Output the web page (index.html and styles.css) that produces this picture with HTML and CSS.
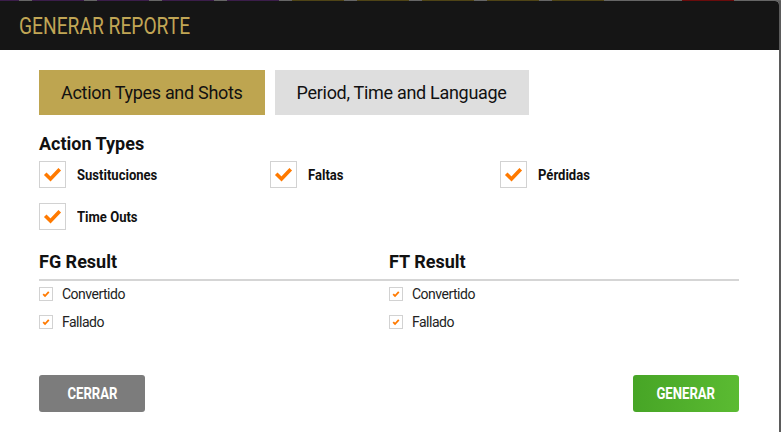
FILE: index.html
```html
<!DOCTYPE html>
<html lang="es">
<head>
<meta charset="utf-8">
<title>Generar reporte</title>
<link rel="stylesheet" href="styles.css">
</head>
<body>
<div class="strip">
  <span class="seg p w19"></span><span class="gap"></span>
  <span class="seg p"></span><span class="gap"></span>
  <span class="seg p"></span><span class="gap"></span>
  <span class="seg p"></span><span class="gap"></span>
  <span class="seg p"></span><span class="gap"></span>
  <span class="seg o"></span><span class="gap"></span>
  <span class="seg o"></span><span class="gap"></span>
  <span class="seg o"></span><span class="gap"></span>
  <span class="seg o"></span><span class="gap"></span>
  <span class="seg o"></span><span class="gap"></span>
  <span class="seg g"></span><span class="gap"></span>
  <span class="seg r"></span><span class="gap"></span>
</div>
<div class="modal">
  <div class="modal-header">
    <span class="cond title">GENERAR REPORTE</span>
  </div>
  <div class="modal-body">
    <div class="tabs">
      <div class="tab active">Action Types and Shots</div>
      <div class="tab">Period, Time and Language</div>
    </div>

    <h3 class="section-title">Action Types</h3>
    <div class="big-checks">
      <label class="big-check"><span class="box"><svg viewBox="0 0 25 25" width="25" height="25"><polyline points="6.5,13 10.5,17 18.5,8.5" fill="none" stroke="#ff7a00" stroke-width="3.6" stroke-linecap="square"/></svg></span><span class="cond lbl">Sustituciones</span></label>
      <label class="big-check"><span class="box"><svg viewBox="0 0 25 25" width="25" height="25"><polyline points="6.5,13 10.5,17 18.5,8.5" fill="none" stroke="#ff7a00" stroke-width="3.6" stroke-linecap="square"/></svg></span><span class="cond lbl">Faltas</span></label>
      <label class="big-check"><span class="box"><svg viewBox="0 0 25 25" width="25" height="25"><polyline points="6.5,13 10.5,17 18.5,8.5" fill="none" stroke="#ff7a00" stroke-width="3.6" stroke-linecap="square"/></svg></span><span class="cond lbl">Pérdidas</span></label>
      <label class="big-check"><span class="box"><svg viewBox="0 0 25 25" width="25" height="25"><polyline points="6.5,13 10.5,17 18.5,8.5" fill="none" stroke="#ff7a00" stroke-width="3.6" stroke-linecap="square"/></svg></span><span class="cond lbl">Time Outs</span></label>
    </div>

    <div class="results">
      <div class="result-col">
        <h3 class="section-title result-title">FG Result</h3>
        <label class="small-check"><span class="sbox"><svg viewBox="0 0 12 12" width="12" height="12"><polyline points="3.2,6.2 5,8 8.8,3.8" fill="none" stroke="#ff7a00" stroke-width="1.8"/></svg></span>Convertido</label>
        <label class="small-check"><span class="sbox"><svg viewBox="0 0 12 12" width="12" height="12"><polyline points="3.2,6.2 5,8 8.8,3.8" fill="none" stroke="#ff7a00" stroke-width="1.8"/></svg></span>Fallado</label>
      </div>
      <div class="result-col">
        <h3 class="section-title result-title">FT Result</h3>
        <label class="small-check"><span class="sbox"><svg viewBox="0 0 12 12" width="12" height="12"><polyline points="3.2,6.2 5,8 8.8,3.8" fill="none" stroke="#ff7a00" stroke-width="1.8"/></svg></span>Convertido</label>
        <label class="small-check"><span class="sbox"><svg viewBox="0 0 12 12" width="12" height="12"><polyline points="3.2,6.2 5,8 8.8,3.8" fill="none" stroke="#ff7a00" stroke-width="1.8"/></svg></span>Fallado</label>
      </div>
    </div>

    <div class="actions">
      <button class="btn btn-close"><span class="cond">CERRAR</span></button>
      <button class="btn btn-generate"><span class="cond">GENERAR</span></button>
    </div>
  </div>
</div>
</body>
</html>
```
FILE: styles.css
```css
html, body {
  margin: 0;
  padding: 0;
}
body {
  background: #5b5b5b;
  font-family: Roboto, "Noto Sans", "Liberation Sans", sans-serif;
  color: #111;
  width: 781px;
  height: 432px;
  overflow: hidden;
}
.strip {
  display: flex;
  height: 1px;
  background: #666;
}
.seg { width: 52px; height: 1px; }
.seg.w19 { width: 19px; }
.gap { width: 13px; height: 1px; }
.seg.p { background: #3b1d4a; }
.seg.o { background: #4f4416; }
.seg.g { background: #666; }
.seg.r { background: #6a0c0c; }

.modal {
  width: 779px;
  height: 440px;
  background: #fff;
  border-radius: 0 4px 0 0;
  overflow: hidden;
}
.modal-header {
  height: 49px;
  background: #151515;
  display: flex;
  align-items: center;
  padding-left: 19px;
}
.cond {
  display: inline-block;
  transform-origin: left center;
}
.title {
  color: #c1a655;
  font-size: 24px;
  font-weight: 400;
  transform: scaleX(0.8);
  margin-top: 1px;
}
.modal-body {
  padding: 20px 40px 0 39px;
}
.tabs {
  display: flex;
  gap: 10px;
}
.tab {
  height: 45px;
  display: flex;
  align-items: center;
  padding: 0 22px;
  font-size: 18px;
  letter-spacing: -0.3px;
  background: #dedede;
  color: #111;
}
.tab.active {
  background: #bea550;
}
.section-title {
  margin: 18px 0 0;
  font-size: 18px;
  line-height: 22px;
  font-weight: 700;
  color: #111;
}
.big-checks {
  display: grid;
  grid-template-columns: 231px 230px 231px;
  row-gap: 15px;
  margin-top: 6px;
}
.big-check {
  display: flex;
  align-items: center;
  height: 27px;
}
.box {
  width: 25px;
  height: 25px;
  border: 1px solid #d2d2d2;
  display: flex;
  margin-right: 11px;
}
.lbl {
  font-size: 15px;
  font-weight: 700;
  color: #111;
  transform: scaleX(0.87);
  margin-top: 1px;
}
.results {
  display: grid;
  grid-template-columns: 350px 350px;
  margin-top: 21px;
}
.result-title {
  margin: 0;
  padding-bottom: 6px;
  border-bottom: 2px solid #d5d5d5;
  margin-bottom: 6px;
}
.small-check {
  display: flex;
  align-items: center;
  height: 14px;
  margin-bottom: 14px;
  font-size: 14px;
  letter-spacing: -0.5px;
  color: #222;
}
.sbox {
  width: 12px;
  height: 12px;
  border: 1px solid #d2d2d2;
  display: flex;
  margin-right: 9px;
}
.actions {
  display: flex;
  justify-content: space-between;
  margin-top: 32px;
}
.btn {
  width: 106px;
  height: 37px;
  border: 0;
  border-radius: 3px;
  color: #fff;
  font-family: Roboto, "Liberation Sans", sans-serif;
  font-size: 16px;
  font-weight: 700;
  padding: 0;
  display: flex;
  align-items: center;
  justify-content: center;
}
.btn .cond {
  transform: scaleX(0.82);
  transform-origin: center;
}
.btn-close { background: #7c7c7c; }
.btn-generate { background: linear-gradient(90deg, #47a526, #5bbb32); }
```
